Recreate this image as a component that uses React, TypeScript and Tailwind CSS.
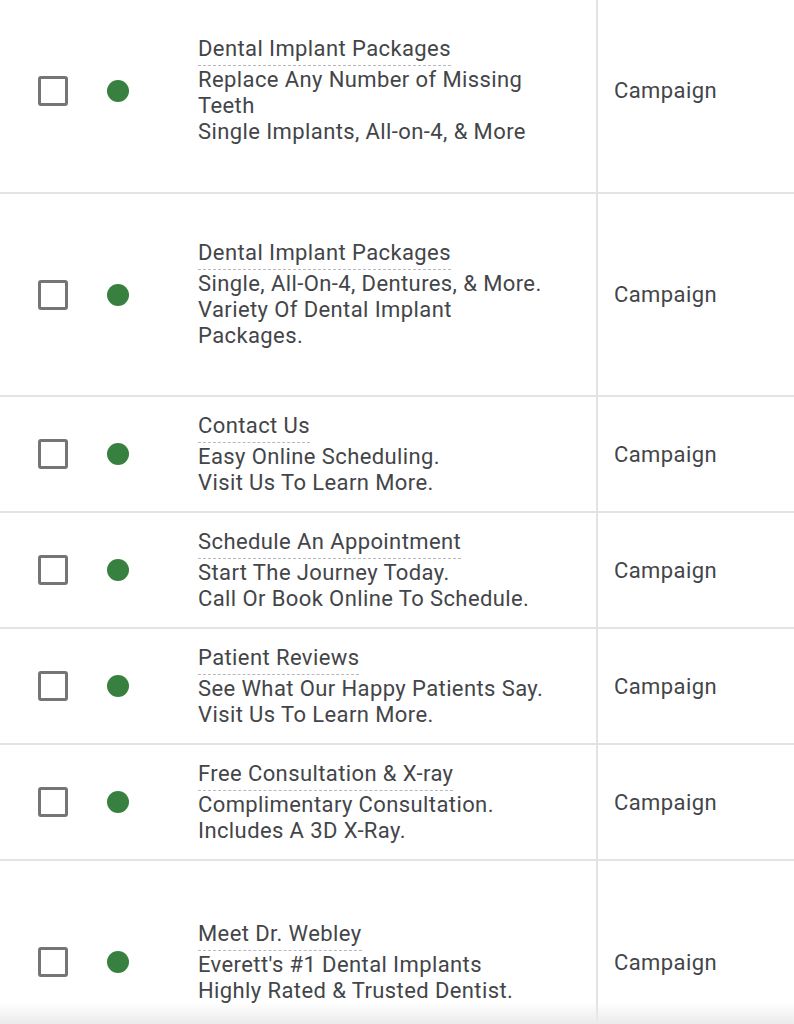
import React from "react";

type Ad = {
  title: string;
  lines: string[];
  height: string;
  pad: string;
};

const ads: Ad[] = [
  {
    title: "Dental Implant Packages",
    lines: ["Replace Any Number of Missing Teeth", "Single Implants, All-on-4, & More"],
    height: "h-[194px]",
    pad: "pb-[11px]",
  },
  {
    title: "Dental Implant Packages",
    lines: ["Single, All-On-4, Dentures, & More.", "Variety Of Dental Implant Packages."],
    height: "h-[203px]",
    pad: "",
  },
  {
    title: "Contact Us",
    lines: ["Easy Online Scheduling.", "Visit Us To Learn More."],
    height: "h-[116px]",
    pad: "",
  },
  {
    title: "Schedule An Appointment",
    lines: ["Start The Journey Today.", "Call Or Book Online To Schedule."],
    height: "h-[116px]",
    pad: "",
  },
  {
    title: "Patient Reviews",
    lines: ["See What Our Happy Patients Say.", "Visit Us To Learn More."],
    height: "h-[116px]",
    pad: "",
  },
  {
    title: "Free Consultation & X-ray",
    lines: ["Complimentary Consultation.", "Includes A 3D X-Ray."],
    height: "h-[116px]",
    pad: "",
  },
  {
    title: "Meet Dr. Webley",
    lines: ["Everett's #1 Dental Implants", "Highly Rated & Trusted Dentist."],
    height: "h-[204px]",
    pad: "",
  },
];

const AdRow: React.FC<{ ad: Ad }> = ({ ad }) => (
  <div className={`flex border-b-2 border-[#e3e3e6] ${ad.height}`}>
    <div className={`flex items-center w-[596px] shrink-0 ${ad.pad}`}>
      <div className="w-[107px] pl-[38px] shrink-0">
        <div className="w-[30px] h-[30px] rounded-[3px] border-[3px] border-[#757575] bg-white" />
      </div>
      <div className="w-[91px] shrink-0">
        <div className="w-[22px] h-[22px] rounded-full bg-[#37803f]" />
      </div>
      <div className="w-[352px] text-[22px] leading-[26px] tracking-[0.4px] text-[#434549]">
        <span className="inline-block border-b border-dashed border-[#b8b8bc] pb-[3px] mb-[1px]">
          {ad.title}
        </span>
        {ad.lines.map((line, i) => (
          <div key={i}>{line}</div>
        ))}
      </div>
    </div>
    <div className={`flex items-center flex-1 border-l-2 border-[#e3e3e6] pl-[16px] text-[22px] tracking-[0.4px] text-[#434549] ${ad.pad}`}>
      Campaign
    </div>
  </div>
);

export default function App() {
  return (
    <div
      className="relative w-[794px] h-[1024px] overflow-hidden bg-white"
      style={{ fontFamily: "Roboto, 'Noto Sans', sans-serif" }}
    >
      {ads.map((ad, i) => (
        <AdRow key={i} ad={ad} />
      ))}
      <div className="absolute left-0 right-0 bottom-0 h-[22px] bg-gradient-to-b from-white/0 to-[#ebebeb]" />
    </div>
  );
}
